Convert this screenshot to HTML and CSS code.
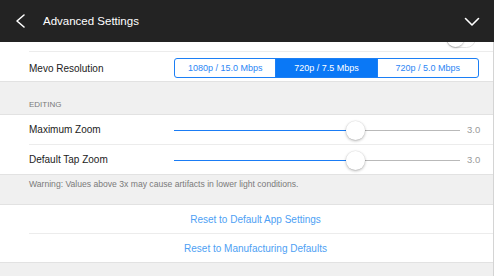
FILE: index.html
```html
<!DOCTYPE html>
<html lang="en">

<head>
    <meta charset="UTF-8">
    <meta name="viewport" content="width=device-width, initial-scale=1.0">
    <title>Advanced Settings</title>
    <link rel="stylesheet" href="styles.css">
</head>

<body>
    <div class="screen">
        <!-- Navigation bar -->
        <header class="nav">
            <svg class="nav-back" width="12" height="16" viewBox="0 0 12 16">
                <polyline points="9,2 2,8 9,14" fill="none" stroke="#fff" stroke-width="1.6" stroke-linecap="round" stroke-linejoin="round"/>
            </svg>
            <h1 class="nav-title">Advanced Settings</h1>
            <svg class="nav-collapse" width="16" height="10" viewBox="0 0 16 10">
                <polyline points="1.5,1.5 8,8 14.5,1.5" fill="none" stroke="#fff" stroke-width="1.6" stroke-linecap="round" stroke-linejoin="round"/>
            </svg>
        </header>

        <main class="content">
            <section class="group">
                <div class="row row-partial">
                    <span class="switch"><span class="switch-knob"></span></span>
                </div>
                <div class="row row-segmented">
                    <span class="label">Mevo Resolution</span>
                    <div class="segmented">
                        <span class="segment">1080p / 15.0 Mbps</span>
                        <span class="segment active">720p / 7.5 Mbps</span>
                        <span class="segment">720p / 5.0 Mbps</span>
                    </div>
                </div>
            </section>

            <div class="section-header">EDITING</div>

            <section class="group">
                <div class="row">
                    <span class="label">Maximum Zoom</span>
                    <div class="slider">
                        <div class="slider-fill" style="width: 63.3%"></div>
                        <div class="slider-thumb" style="left: 63.3%"></div>
                    </div>
                    <span class="value">3.0</span>
                </div>
                <div class="row">
                    <span class="label">Default Tap Zoom</span>
                    <div class="slider">
                        <div class="slider-fill" style="width: 63.3%"></div>
                        <div class="slider-thumb" style="left: 63.3%"></div>
                    </div>
                    <span class="value">3.0</span>
                </div>
            </section>

            <p class="footnote">Warning: Values above 3x may cause artifacts in lower light conditions.</p>

            <section class="group">
                <div class="row row-action">Reset to Default App Settings</div>
                <div class="row row-action">Reset to Manufacturing Defaults</div>
            </section>
        </main>
    </div>
</body>

</html>
```

FILE: styles.css
```css
body {
    margin: 0;
    padding: 0;
    background-color: #f0f0f0;
    font-family: 'Liberation Sans', Arial, sans-serif;
    overflow: hidden;
}

.screen {
    width: 494px;
    height: 276px;
    overflow: hidden;
}

/* Navigation bar */
.nav {
    height: 42px;
    background-color: #232323;
    display: flex;
    align-items: center;
    padding: 0 14px 0 15px;
    box-sizing: border-box;
}
.nav-title {
    margin: 0 0 0 16px;
    flex: 1;
    color: #fff;
    font-size: 11.5px;
    font-weight: normal;
    padding-bottom: 1px;
}
.nav-collapse {
    margin-top: 1px;
}

/* Content */
.content {
    border-right: 1px solid #d4d4d4;
    height: 234px;
}

.group {
    background-color: #fff;
    border-top: 1px solid #e2e2e2;
    border-bottom: 1px solid #e2e2e2;
}
.group:first-child {
    border-top: none;
}

.row {
    height: 30px;
    margin-left: 29px;
    padding-right: 13px;
    box-sizing: border-box;
    display: flex;
    align-items: center;
    border-bottom: 1px solid #ececec;
}
.row:last-child {
    height: 29px;
    border-bottom: none;
}

.row-partial {
    height: 10px;
    overflow: hidden;
    align-items: flex-end;
    justify-content: flex-end;
    padding-bottom: 3px;
}

.row-segmented {
    padding-top: 3px;
}

.switch {
    position: relative;
    display: block;
    width: 30px;
    height: 19px;
    margin-right: 4px;
    border-radius: 10px;
    border: 1px solid #e4e4e4;
    box-sizing: border-box;
    flex-shrink: 0;
}
.switch-knob {
    position: absolute;
    left: 0;
    top: 0;
    width: 17px;
    height: 17px;
    border-radius: 50%;
    background: #fff;
    box-shadow: 0 1px 2px rgba(0, 0, 0, 0.3);
}

.label {
    width: 145px;
    flex-shrink: 0;
    font-size: 10px;
    color: #222;
}

/* Segmented control */
.segmented {
    flex: 1;
    display: flex;
    height: 20px;
    margin-right: 1px;
    border: 1px solid #1c7ff5;
    border-radius: 3px;
    box-sizing: border-box;
    overflow: hidden;
}
.segment {
    flex: 1;
    display: flex;
    align-items: center;
    justify-content: center;
    font-size: 9px;
    color: #2c86f5;
}
.segment + .segment {
    border-left: 1px solid #1c7ff5;
}
.segment.active {
    background-color: #0a78f6;
    color: #fff;
}

/* Slider */
.slider {
    position: relative;
    flex: 1;
    height: 1px;
    background-color: #b9b9b9;
    margin-top: 1px;
}
.slider-fill {
    height: 100%;
    background-color: #1a7cf5;
}
.slider-thumb {
    position: absolute;
    top: -9px;
    width: 19px;
    height: 19px;
    margin-left: -9px;
    border-radius: 50%;
    background-color: #fff;
    box-shadow: 0 1px 3px rgba(0, 0, 0, 0.3), 0 0 0 0.5px rgba(0, 0, 0, 0.06);
}

.value {
    width: 13px;
    margin-left: 7px;
    text-align: right;
    font-size: 9.5px;
    color: #9a9a9a;
}

/* Section header and footnote */
.section-header {
    height: 32px;
    box-sizing: border-box;
    padding: 0 29px 4px;
    display: flex;
    align-items: flex-end;
    font-size: 8px;
    line-height: 10px;
    color: #7a7a7a;
}

.footnote {
    margin: 0;
    height: 29px;
    box-sizing: border-box;
    padding: 4px 29px 0;
    font-size: 8.6px;
    line-height: 10px;
    color: #7a7a7a;
}

/* Actions */
.row-action {
    height: 29px;
    justify-content: center;
    padding-right: 11px;
    font-size: 10px;
    color: #4e9ff4;
}
.row-action:last-child {
    height: 28px;
}
```
